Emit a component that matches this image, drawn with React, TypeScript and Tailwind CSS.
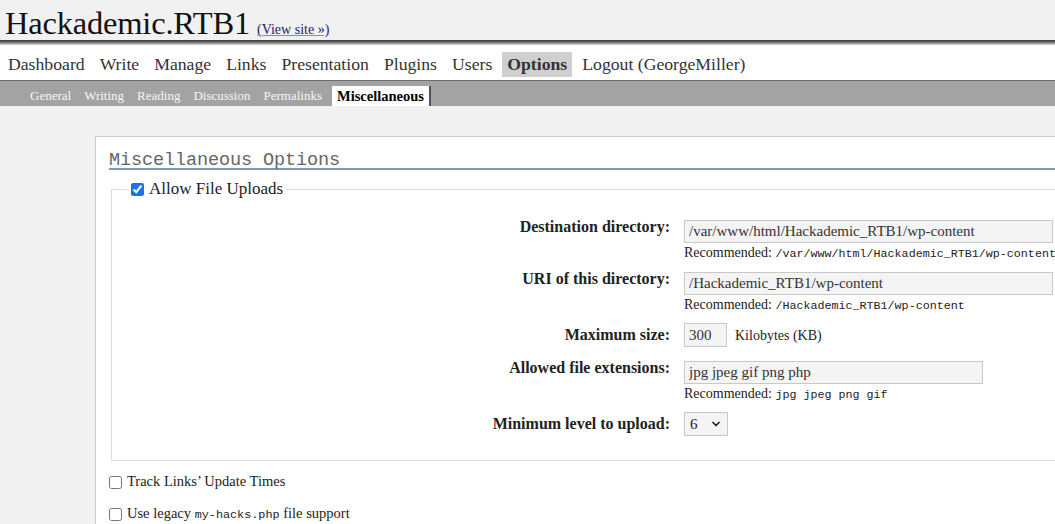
import { ChevronDown } from "lucide-react";

const serif = { fontFamily: '"Liberation Serif", "DejaVu Serif", serif' };

const navItems = ["Dashboard", "Write", "Manage", "Links", "Presentation", "Plugins", "Users", "Options", "Logout (GeorgeMiller)"];
const subItems = ["General", "Writing", "Reading", "Discussion", "Permalinks", "Miscellaneous"];

const inputCls = "block h-[23px] px-[4px] bg-[#f4f4f4] border border-[#c8c8c8] text-[15px] text-[#333] outline-none";
const labelCls = "text-right font-bold text-[16px] leading-[12px] pt-[1px]";

const Recommended = ({ value }: { value: string }) => (
  <div className="text-[14px] leading-[16px] text-[#222] whitespace-nowrap mt-[2px]">
    Recommended: <code className="font-['Liberation_Mono',monospace] text-[11.7px]">{value}</code>
  </div>
);

export default function App() {
  return (
    <div className="h-[524px] bg-[#f1f1f1] text-[#222] overflow-hidden" style={serif}>
      {/* site title */}
      <div className="h-[40px] flex items-baseline pl-[5px] pt-[6px]">
        <h1 className="text-[32.5px] leading-[34px] tracking-[-0.2px] text-[#111]">Hackademic.RTB1</h1>
        <a href="#" className="ml-[7px] text-[14px] text-[#1a1a6e] underline decoration-[#8888bb]">
          (View site »)
        </a>
      </div>
      <div className="h-[5px] bg-gradient-to-b from-[#333] via-[#777] to-[#ddd]" />

      {/* main menu */}
      <nav className="h-[35px] bg-white flex items-center pl-[3px] gap-[5px] text-[17.7px]">
        {navItems.map((item) => (
          <a
            key={item}
            href="#"
            className={
              item === "Options"
                ? "px-[5px] h-[25px] leading-[25px] mt-[4px] bg-[#cfcfcf] font-bold text-[#333]"
                : "px-[5px] mt-[4px] text-[#333]"
            }
          >
            {item}
          </a>
        ))}
      </nav>

      {/* sub menu */}
      <div className="h-[26px] border-t border-[#6d6d6d] bg-[#a3a3a3] flex items-end pl-[25px] gap-[3px] text-[13px]">
        {subItems.map((item) =>
          item === "Miscellaneous" ? (
            <a key={item} href="#" className="h-[20px] leading-[20px] px-[5px] ml-[2px] bg-white text-black text-[14.5px] font-bold border-r-2 border-[#555]">
              {item}
            </a>
          ) : (
            <a key={item} href="#" className="h-[20px] leading-[20px] px-[5px] text-[#f6f6f6]">
              {item}
            </a>
          )
        )}
      </div>

      {/* content panel */}
      <div className="mt-[30px] ml-[95px] bg-white border-t border-l border-[#ccc] pl-[13px] pt-[13px]">
        <h2 className="font-['Liberation_Mono',monospace] text-[18.5px] leading-[15px] pt-[3px] text-[#666] border-b-2 border-[#7b9ab3] tracking-[-0.1px]">
          Miscellaneous Options
        </h2>

        <fieldset className="mt-[9px] border border-[#ddd] border-r-0 ml-[2px] pb-[24px] min-w-0">
          <legend className="ml-[15px] px-[4px] flex items-center gap-[5px] text-[17px] leading-[20px]">
            <input type="checkbox" defaultChecked className="w-[13px] h-[13px] accent-[#1a73e8]" />
            Allow File Uploads
          </legend>

          <div className="grid grid-cols-[558px_1fr] gap-x-[14px] mt-[21px]">
            <div className={labelCls}>Destination directory:</div>
            <div>
              <input readOnly value="/var/www/html/Hackademic_RTB1/wp-content" className={`${inputCls} w-[369px]`} style={serif} />
              <Recommended value="/var/www/html/Hackademic_RTB1/wp-content" />
            </div>

            <div className={`${labelCls} mt-[10px]`}>URI of this directory:</div>
            <div className="mt-[10px]">
              <input readOnly value="/Hackademic_RTB1/wp-content" className={`${inputCls} w-[369px]`} style={serif} />
              <Recommended value="/Hackademic_RTB1/wp-content" />
            </div>

            <div className={`${labelCls} mt-[9px] pt-[6px]`}>Maximum size:</div>
            <div className="mt-[9px] flex items-center gap-[8px]">
              <input readOnly value="300" className={`${inputCls} w-[43px] h-[24px]`} style={serif} />
              <span className="text-[14px]">Kilobytes (KB)</span>
            </div>

            <div className={`${labelCls} mt-[14px]`}>Allowed file extensions:</div>
            <div className="mt-[14px]">
              <input readOnly value="jpg jpeg gif png php" className={`${inputCls} w-[299px]`} style={serif} />
              <Recommended value="jpg jpeg png gif" />
            </div>

            <div className={`${labelCls} mt-[9px] pt-[6px]`}>Minimum level to upload:</div>
            <div className="mt-[9px]">
              <div className="w-[44px] h-[24px] bg-[#f4f4f4] border border-[#c8c8c8] flex items-center justify-between pl-[5px] pr-[5px] text-[15px]">
                <span>6</span>
                <ChevronDown size={12} strokeWidth={3.5} className="text-[#222]" />
              </div>
            </div>
          </div>
        </fieldset>

        <div className="mt-[11px] flex flex-col gap-[12px] text-[14.5px]">
          <label className="flex items-center gap-[5px] h-[20px]">
            <input type="checkbox" className="w-[13px] h-[13px]" />
            Track Links’ Update Times
          </label>
          <label className="flex items-center gap-[5px] h-[20px]">
            <input type="checkbox" className="w-[13px] h-[13px]" />
            <span>
              Use legacy <code className="font-['Liberation_Mono',monospace] text-[11.8px]">my-hacks.php</code> file support
            </span>
          </label>
        </div>
      </div>
    </div>
  );
}
